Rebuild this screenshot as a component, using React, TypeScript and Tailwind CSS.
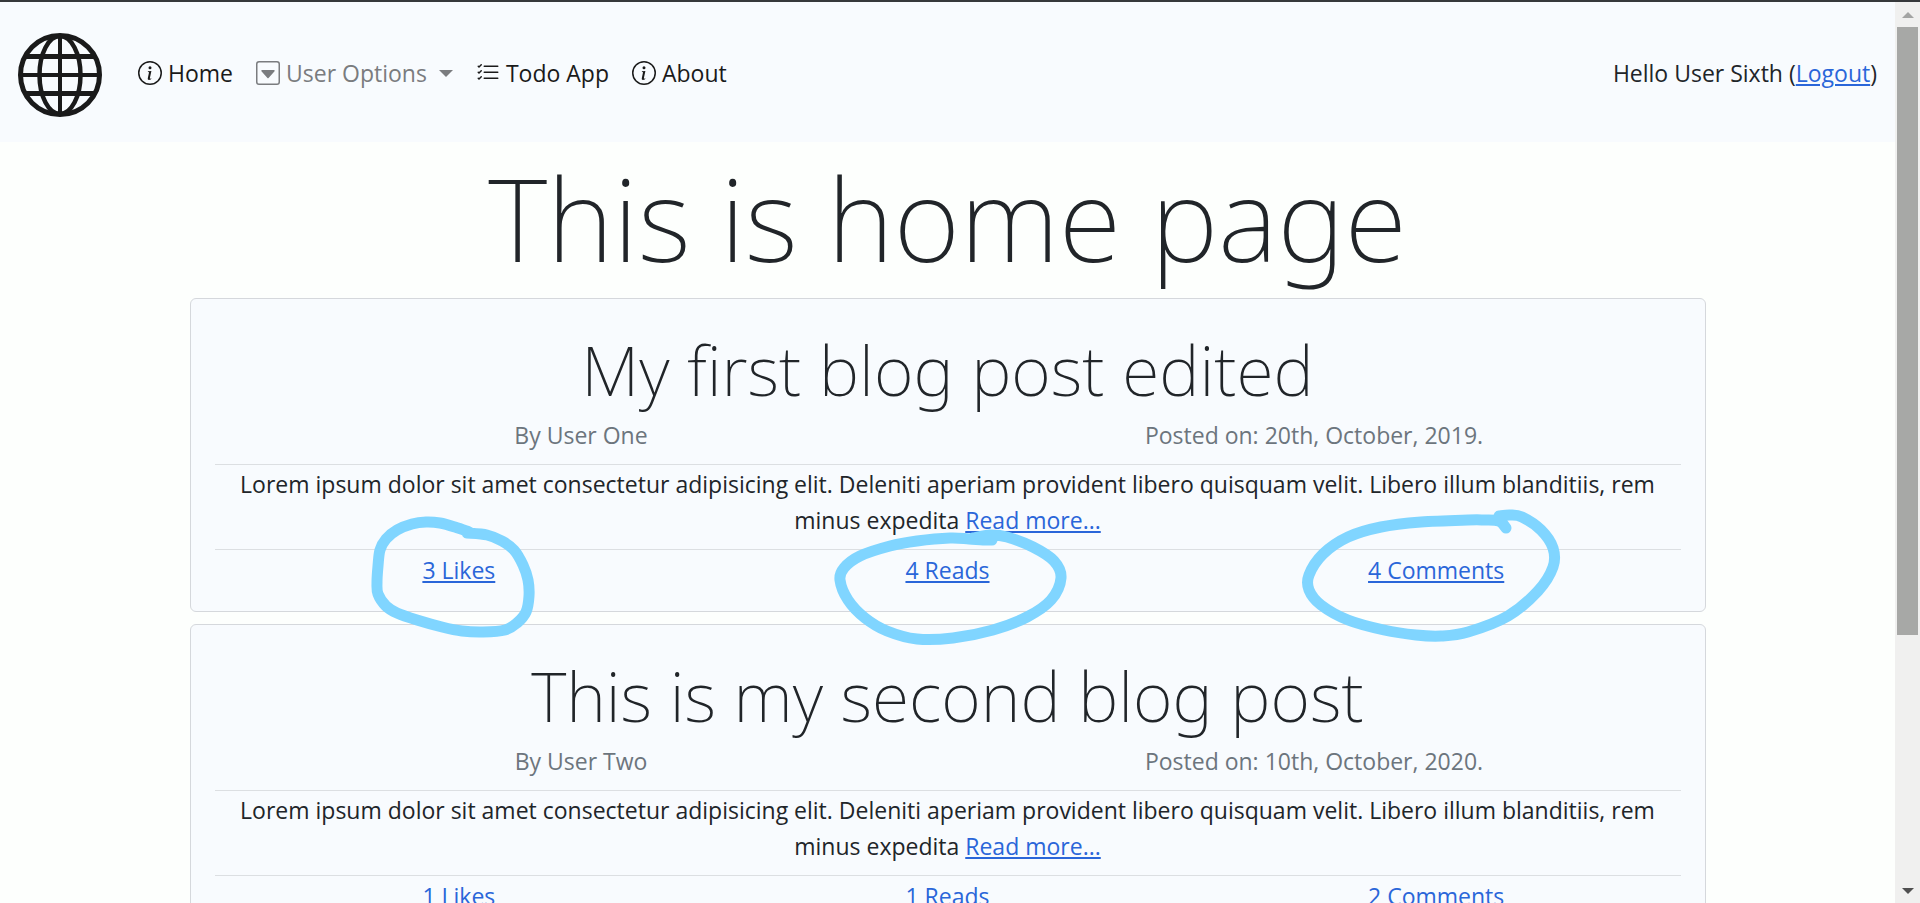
import type { ReactNode } from "react";
import { BsCaretDownSquare, BsInfoCircle, BsListCheck } from "react-icons/bs";

type Point = [number, number];

/** Turns a list of points into one smooth freehand curve. */
function smoothPath(points: Point[]): string {
  let d = `M${points[0][0]} ${points[0][1]}`;
  for (let i = 0; i < points.length - 1; i++) {
    const p0 = points[i - 1] ?? points[i];
    const p1 = points[i];
    const p2 = points[i + 1];
    const p3 = points[i + 2] ?? p2;
    const c1 = [p1[0] + (p2[0] - p0[0]) / 6, p1[1] + (p2[1] - p0[1]) / 6];
    const c2 = [p2[0] - (p3[0] - p1[0]) / 6, p2[1] - (p3[1] - p1[1]) / 6];
    d += ` C${c1[0]} ${c1[1]} ${c2[0]} ${c2[1]} ${p2[0]} ${p2[1]}`;
  }
  return d;
}

/* Pen marks; coordinates are relative to the centre of the marked link. */
const likesMark: Point[] = [
  [10, -38], [-4, -43], [-19, -47], [-33, -48], [-47, -46], [-62, -40], [-73, -31], [-79, -20], [-81, -4],
  [-82, 12], [-81, 24], [-73, 36], [-62, 43], [-42, 50], [-17, 57], [3, 61], [24, 62], [46, 60],
  [58, 53], [67, 42], [70, 26], [69, 10], [64, -5], [55, -20], [43, -29], [28, -35], [8, -37],
];
const readsMark: Point[] = [
  [45, -30], [36, -30], [22, -31], [3, -32], [-30, -29], [-57, -24], [-87, -14], [-103, -2], [-107, 10],
  [-99, 30], [-82, 48], [-60, 61], [-30, 69], [6, 68], [46, 60], [80, 47], [104, 30], [114, 8],
  [107, -9], [86, -23], [60, -33], [43, -35], [26, -32],
];
const commentsMark: Point[] = [
  [70, -42], [63, -49], [48, -50], [32, -50], [-15, -48], [-55, -43], [-88, -33], [-113, -16], [-127, 5],
  [-127, 20], [-115, 35], [-88, 50], [-52, 60], [-20, 65], [5, 66], [32, 62], [72, 46], [102, 21],
  [117, -3], [117, -22], [105, -40], [86, -53], [74, -55], [63, -54],
];

function PenMark({ points }: { points: Point[] }) {
  return (
    <svg
      aria-hidden="true"
      viewBox="-140 -80 280 160"
      className="pointer-events-none absolute top-1/2 left-1/2 z-10 h-40 w-[280px] -translate-x-1/2 -translate-y-1/2 overflow-visible"
    >
      <path
        d={smoothPath(points)}
        fill="none"
        stroke="#80d5ff"
        strokeWidth="11"
        strokeLinecap="round"
        strokeLinejoin="round"
      />
    </svg>
  );
}

function Globe() {
  return (
    <svg viewBox="0 0 84 84" className="size-[84px]" fill="none" stroke="#1a1a1a" aria-hidden="true">
      <circle cx="42" cy="42" r="39.5" strokeWidth="5" />
      <ellipse cx="42" cy="42" rx="20.5" ry="39" strokeWidth="4.5" />
      <path d="M42 2v80M3 42h78" strokeWidth="4" />
      <path d="M8 23.500h68M8 60.500h68" strokeWidth="5" />
    </svg>
  );
}

const linkClass = "text-[#2a66d9] underline decoration-2 underline-offset-2";
const titleClass = "font-['Noto_Sans','Open_Sans',sans-serif] font-extralight";

interface Post {
  title: string;
  author: string;
  date: string;
  counts: { label: string; mark?: Point[] }[];
}

const posts: Post[] = [
  {
    title: "My first blog post edited",
    author: "User One",
    date: "20th, October, 2019.",
    counts: [
      { label: "3 Likes", mark: likesMark },
      { label: "4 Reads", mark: readsMark },
      { label: "4 Comments", mark: commentsMark },
    ],
  },
  {
    title: "This is my second blog post",
    author: "User Two",
    date: "10th, October, 2020.",
    counts: [{ label: "1 Likes" }, { label: "1 Reads" }, { label: "2 Comments" }],
  },
];

function PostCard({ post }: { post: Post }) {
  return (
    <article className="rounded-md border border-[#d5d8dc] bg-[#f8fbfe] px-6 pt-8 pb-[23px] text-center">
      <h2 className={`mb-2 text-[68px] leading-[78px] ${titleClass}`}>{post.title}</h2>
      <div className="grid grid-cols-2 text-[#6c757d]">
        <p>By {post.author}</p>
        <p>Posted on: {post.date}</p>
      </div>
      <p className="mt-[11px] border-y border-[#dcdfe2] px-5 pt-px pb-[11px]">
        Lorem ipsum dolor sit amet consectetur adipisicing elit. Deleniti aperiam provident libero quisquam velit.
        Libero illum blanditiis, rem minus expedita{" "}
        <a href="#post" className={linkClass}>
          Read more...
        </a>
      </p>
      <div className="mt-[2px] grid grid-cols-3">
        {post.counts.map(({ label, mark }) => (
          <div key={label} className="relative">
            <a href="#post" className={linkClass}>
              {label}
            </a>
            {mark && <PenMark points={mark} />}
          </div>
        ))}
      </div>
    </article>
  );
}

function NavLink({ icon, children }: { icon: ReactNode; children: ReactNode }) {
  return (
    <a href="#page" className="flex items-center gap-[6px]">
      {icon}
      {children}
    </a>
  );
}

function Triangle({ className, up = false }: { className: string; up?: boolean }) {
  return (
    <svg viewBox="0 0 14 7" className={className} fill="currentColor" aria-hidden="true">
      <path d={up ? "M0 7L7 0L14 7Z" : "M0 0H14L7 7Z"} />
    </svg>
  );
}

export default function App() {
  return (
    <div className="flex h-screen flex-col bg-[#fdfffd] font-['Open_Sans','Noto_Sans',sans-serif] text-[23px] leading-9 text-[#212529]">
      <div className="h-[2px] shrink-0 bg-[#36393b]" />
      <div className="flex min-h-0 flex-1">
        <div className="min-w-0 flex-1 overflow-y-auto [scrollbar-width:none]">
          <header className="flex h-[140px] items-center bg-[#f8fbfe] px-[18px] pt-[2px]">
            <a href="#page" aria-label="Home page" className="mt-1">
              <Globe />
            </a>
            <nav className="ml-9 flex items-center gap-[23px] text-[#1a1a1a]">
              <NavLink icon={<BsInfoCircle className="size-6" />}>Home</NavLink>
              <button type="button" className="flex items-center gap-[6px] text-[#7a7c7f]">
                <BsCaretDownSquare className="size-6" />
                User Options
                <Triangle className="ml-[6px] h-[7px] w-[14px]" />
              </button>
              <NavLink icon={<BsListCheck className="size-6" />}>Todo App</NavLink>
              <NavLink icon={<BsInfoCircle className="size-6" />}>About</NavLink>
            </nav>
            <p className="ml-auto">
              Hello User Sixth (
              <a href="#logout" className={linkClass}>
                Logout
              </a>
              )
            </p>
          </header>
          <main className="mx-auto w-4/5">
            <h1 className={`mb-3 pt-2 text-center text-[114px] leading-[136px] ${titleClass}`}>This is home page</h1>
            <div className="flex flex-col gap-3">
              {posts.map((post) => (
                <PostCard key={post.title} post={post} />
              ))}
            </div>
          </main>
        </div>
        <div aria-hidden="true" className="flex w-[25px] shrink-0 flex-col items-center bg-[#f0f0ef]">
          <div className="flex h-[25px] items-center text-[#a3a4a3]">
            <Triangle up className="h-[6px] w-3" />
          </div>
          <div className="flex w-[21px] flex-1 flex-col">
            <div className="h-[71.500%] bg-[#a7a8a6]" />
          </div>
          <div className="flex h-[25px] items-center text-[#505050]">
            <Triangle className="h-[6px] w-3" />
          </div>
        </div>
      </div>
    </div>
  );
}
